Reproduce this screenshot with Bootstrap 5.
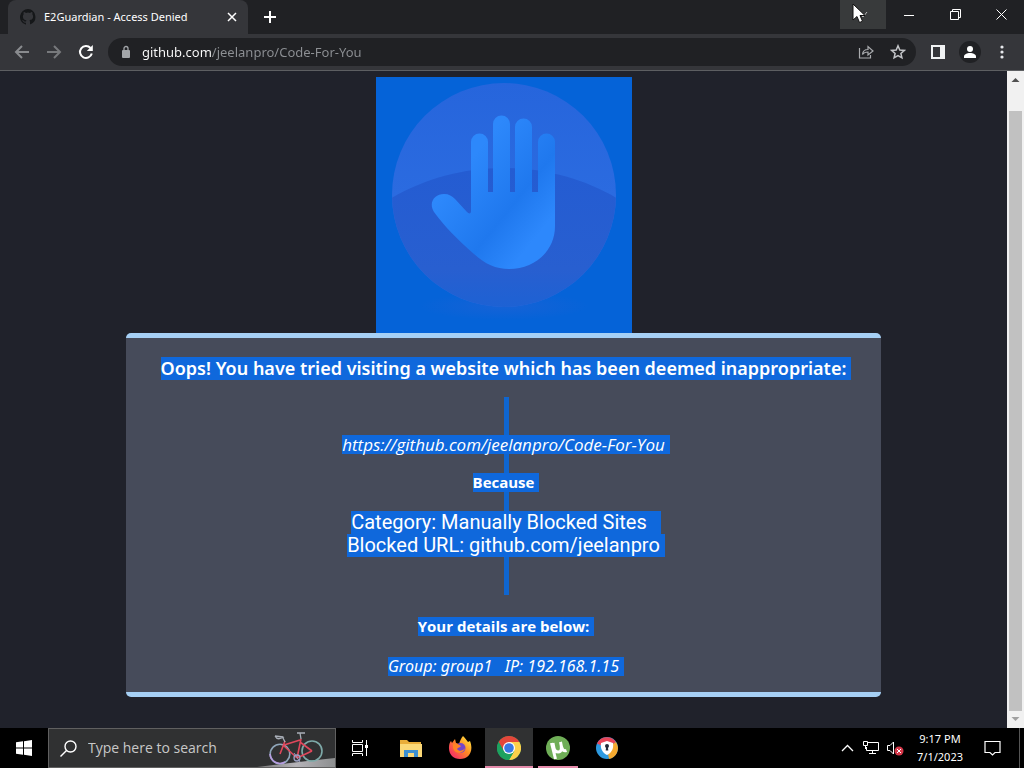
<!DOCTYPE html>
<html lang="en">
<head>
<meta charset="utf-8">
<meta name="viewport" content="width=device-width, initial-scale=1">
<title>E2Guardian - Access Denied</title>
<link rel="stylesheet" href="https://cdn.jsdelivr.net/npm/bootstrap@5.3.0/dist/css/bootstrap.min.css">
<style>
:root { --sel: #0f68dc; --bar: #35363a; --frame: #202124; }
body { font-family: "Noto Sans", sans-serif; font-size: 11px; line-height: 16px; background: #20222b; color: #fff; }
svg { display: block; flex: none; }
.plain { border: 0; background: transparent; color: inherit; padding: 0; display: flex; align-items: center; justify-content: center; }

/* tab strip */
.tabstrip { height: 34px; background: var(--frame); }
.tab-item { width: 240px; margin-left: 8px; padding: 0 10px 0 12px; background: var(--bar); border-radius: 8px 8px 0 0; }
.tab-title { font-size: 11px; }
.win-btn { width: 46px; height: 29px; }
.win-btn.hovered { background: #383a3b; }
.pointer { left: 12px; top: 3px; }

/* toolbar */
.toolbar { height: 37px; padding: 0 6px; background: var(--bar); border-bottom: 1px solid #5d5f62; }
.tool-btn { width: 32px; height: 28px; }
.omnibox { height: 28px; margin: 0 6px; padding: 0 2px 0 12px; border-radius: 14px; background: var(--frame); }
.address { height: 24px; border: 0; outline: 0; padding: 0; margin-left: 10px; font-size: 13px; color: #9a9da1; min-width: 0;
  background: linear-gradient(90deg, #fff 69px, #8d9094 69px); -webkit-background-clip: text; background-clip: text; -webkit-text-fill-color: transparent; }

/* blocked page */
.page-body { padding-top: 6px; font-family: "Open Sans", sans-serif; background: #20222b; min-width: 0; }
.hand-art { background: #0563d8; }
.notice { width: 75%; background: #464b5a; border-top: 5px solid #a6d0f5; border-bottom: 5px solid #a6d0f5; border-radius: 5px; padding: 19px 0 16px; text-align: center; white-space: nowrap; }
.notice h1, .notice h2, .notice p { margin: 0; font-size: 15px; line-height: 19px; }
.notice h1 { font-family: "Noto Sans", sans-serif; font-size: 18px; line-height: 23px; font-weight: 600; }
.notice h2 { font-weight: 700; }
.notice p { font-size: 16px; }
.notice .blocked-url { font-size: 17px; }
.notice .details p { font-family: "Noto Sans", sans-serif; }
.notice .big { font-family: Roboto, sans-serif; font-size: 20px; line-height: 23px; }
.sel { display: inline-block; vertical-align: top; background: var(--sel); box-shadow: 5px 0 0 var(--sel); }
.reason { margin: 17px 0 22px; padding: 38px 0; gap: 19px; z-index: 0; }
.reason::before { content: ""; position: absolute; z-index: -1; left: 50%; top: 0; bottom: 0; width: 5px; background: #0f66d0; }
.trail { padding-right: 9px; }
.details { gap: 21px; }

/* scrollbar */
.scroller { width: 17px; background: #f1f1f1; }
.scroller svg { margin: 0 auto; }
.scroll-gap { height: 23px; }
.scroll-thumb { margin: 0 2px; background: #c1c1c1; }

/* taskbar */
.taskbar { height: 40px; background: #000; }
.task-btn { width: 48px; height: 40px; }
.apps { gap: 1px; margin-left: 3px; }
.running { border-bottom: 2px solid #e58bab; padding-top: 2px; }
.running.active-app { background: #303132; }
.running.narrow { width: 40px; margin: 0 4px; }
.search-box { width: 288px; border: 1px solid #606060; background: #303132; padding-left: 11px; }
.search-box input { border: 0; outline: 0; background: transparent; font-family: "Open Sans", sans-serif; font-size: 14px; line-height: 20px; color: #fff; padding: 0; margin-left: 11px; min-width: 0; }
.search-box input::placeholder { color: #c8c8c8; opacity: 1; }
.tray-btn { width: 24px; height: 40px; }
.clock { width: 66px; line-height: 18px; }
.note-btn { width: 38px; height: 40px; }
.desk-edge { width: 5px; border-left: 1px solid #555; }
</style>
</head>
<body class="d-flex flex-column vh-100 overflow-hidden">

<header>
  <div class="tabstrip d-flex align-items-start">
    <div class="tab-item d-flex align-items-center h-100">
      <svg width="16" height="16" viewBox="0 0 16 16" fill="#151719"><path d="M8 0a8 8 0 0 0-2.500 15.600c.4.1.5-.2.5-.4v-1.500C3.800 14.200 3.300 12.600 3.300 12.600c-.4-.9-.9-1.200-.9-1.200-.7-.5.1-.5.1-.5.8.1 1.200.8 1.200.8.7 1.200 1.900.9 2.300.7.1-.5.3-.9.5-1.100-1.800-.2-3.600-.9-3.600-4 0-.9.3-1.600.8-2.100-.1-.2-.4-1 .1-2.100 0 0 .7-.2 2.200.8a7.500 7.500 0 0 1 4 0c1.500-1 2.200-.8 2.200-.8.4 1.100.2 1.900.1 2.100.5.6.8 1.300.8 2.100 0 3.100-1.900 3.700-3.700 3.900.3.300.6.800.6 1.500v2.200c0 .2.100.500.600.400A8 8 0 0 0 8 0z"/></svg>
      <span class="tab-title ms-2 me-auto">E2Guardian - Access Denied</span>
      <button class="plain" type="button" aria-label="Close tab"><svg width="12" height="12" viewBox="0 0 12 12" stroke="#fff" stroke-width="1.500"><path d="M2 2l8 8M10 2l-8 8"/></svg></button>
    </div>
    <button class="plain h-100 ms-3" type="button" aria-label="New tab"><svg width="12" height="12" viewBox="0 0 12 12" stroke="#fff" stroke-width="2"><path d="M6 0v12M0 6h12"/></svg></button>
    <div class="d-flex ms-auto">
      <button class="plain win-btn hovered position-relative" type="button" aria-label="Search tabs">
        <svg width="10" height="10" viewBox="0 0 10 10" fill="none" stroke="#bbb"><path d="M1 3l4 4 4-5"/></svg>
        <svg class="pointer position-absolute" width="14" height="21" viewBox="0 0 14 21"><path d="M1 1v16l4-3.500 2.500 6 3-1.300L8 12.500h5z" fill="#fff" stroke="#111"/></svg>
      </button>
      <button class="plain win-btn" type="button" aria-label="Minimize"><svg width="10" height="10" viewBox="0 0 10 10" stroke="#fff"><path d="M0 5.500h10"/></svg></button>
      <button class="plain win-btn" type="button" aria-label="Restore"><svg width="11" height="11" viewBox="0 0 11 11" fill="none" stroke="#fff"><path d="M.5 2.500h8v8h-8zM2.500 2.500v-2h8v8h-2"/></svg></button>
      <button class="plain win-btn" type="button" aria-label="Close"><svg width="11" height="11" viewBox="0 0 11 11" stroke="#fff"><path d="M.5.500l10 10M10.500.500l-10 10"/></svg></button>
    </div>
  </div>
  <div class="toolbar d-flex align-items-center">
    <button class="plain tool-btn" type="button" aria-label="Back"><svg width="16" height="16" viewBox="0 0 16 16" fill="none" stroke="#898b8e" stroke-width="2"><path d="M15 8H2M8 2L2 8l6 6"/></svg></button>
    <button class="plain tool-btn" type="button" aria-label="Forward"><svg width="16" height="16" viewBox="0 0 16 16" fill="none" stroke="#77797c" stroke-width="2"><path d="M1 8h13M8 2l6 6-6 6"/></svg></button>
    <button class="plain tool-btn" type="button" aria-label="Reload"><svg width="16" height="16" viewBox="0 0 16 16" fill="none" stroke="#fff" stroke-width="2"><path d="M13.800 9.500A6 6 0 1 1 12.500 4"/><path d="M14.800 1v6h-6z" fill="#fff" stroke="none"/></svg></button>
    <div class="omnibox d-flex align-items-center flex-grow-1">
      <svg width="12" height="14" viewBox="0 0 12 14"><rect x="2" y="5" width="8" height="8" rx="1" fill="#a3a6aa"/><path d="M4 5.500V3.500a2 2 0 0 1 4 0v2" fill="none" stroke="#a3a6aa" stroke-width="1.300"/></svg>
      <input class="address flex-grow-1" type="text" aria-label="Address" value="github.com/jeelanpro/Code-For-You">
      <button class="plain tool-btn" type="button" aria-label="Share"><svg width="16" height="16" viewBox="0 0 16 16" fill="none" stroke="#a9abae" stroke-width="1.200"><path d="M1.500 4v10h11v-3M4.500 10.500c.3-3.500 2-5 5.500-5v-3l5 4.500-5 4V8c-2.700 0-4.300.7-5.500 2.500z"/></svg></button>
      <button class="plain tool-btn" type="button" aria-label="Bookmark"><svg width="16" height="16" viewBox="0 0 16 16" fill="none" stroke="#c3c5c8" stroke-width="1.500"><path d="M8 1.800l1.800 4.200 4.500.400-3.400 3 1 4.400L8 11.500l-3.900 2.300 1-4.400-3.400-3L6.200 6z"/></svg></button>
    </div>
    <button class="plain tool-btn" type="button" aria-label="Side panel"><svg width="14" height="14" viewBox="0 0 14 14"><path d="M1 1h12v12H1z" fill="none" stroke="#f1f3f4" stroke-width="2"/><path d="M9 0h5v14H9z" fill="#f1f3f4"/></svg></button>
    <button class="plain tool-btn" type="button" aria-label="Profile"><svg width="22" height="22" viewBox="0 0 22 22"><circle cx="11" cy="11" r="11" fill="#202124"/><circle cx="11" cy="8" r="3" fill="#fff"/><path d="M5 17v-1.500c0-2 3-3.500 6-3.500s6 1.500 6 3.500V17z" fill="#fff"/></svg></button>
    <button class="plain tool-btn" type="button" aria-label="Menu"><svg width="4" height="14" viewBox="0 0 4 14" fill="#e8eaed"><circle cx="2" cy="2" r="1.600"/><circle cx="2" cy="7" r="1.600"/><circle cx="2" cy="12" r="1.600"/></svg></button>
  </div>
</header>

<div class="d-flex flex-grow-1 overflow-hidden">
  <main class="page-body flex-grow-1 d-flex flex-column align-items-center">
    <svg class="hand-art" width="256" height="256" viewBox="0 0 256 256" role="img" aria-label="Raised hand">
      <defs>
        <linearGradient id="disc" x1="0" y1="0" x2="0" y2="1"><stop offset="0" stop-color="#2665dc"/><stop offset=".5" stop-color="#2b6be0"/></linearGradient>
        <linearGradient id="dune" x1="0" y1="0" x2="0" y2="1"><stop offset="0" stop-color="#245cd2"/><stop offset=".7" stop-color="#285fd0"/><stop offset="1" stop-color="#1c62d4"/></linearGradient>
        <linearGradient id="palm" x1="0" y1="0" x2="1" y2="1"><stop offset=".3" stop-color="#2d88fb"/><stop offset=".62" stop-color="#1f78ee"/><stop offset=".82" stop-color="#2d88fc"/></linearGradient>
        <radialGradient id="shade"><stop offset="0" stop-color="#1662d6"/><stop offset="1" stop-color="#0563d8"/></radialGradient>
        <clipPath id="round"><circle cx="128" cy="118" r="112"/></clipPath>
      </defs>
      <ellipse cx="128" cy="229" rx="85" ry="14" fill="url(#shade)"/>
      <circle cx="128" cy="118" r="112" fill="url(#disc)"/>
      <path clip-path="url(#round)" d="M0 131C35 106 80 91 128 91s93 15 128 40v105H0z" fill="url(#dune)"/>
      <path fill="url(#palm)" d="M95 134V65a8.500 8.500 0 0 1 17 0v50h5V47a8.500 8.500 0 0 1 17 0v68h5V50a8.500 8.500 0 0 1 17 0v65h6V65a8.500 8.500 0 0 1 17 0v84c0 25-20 43-46 43-13 0-24-5-35-15C81 162 69 150 58 135c-6-10 1-18 10-18 5 0 8 2 11 5l12 13c2 2 4 2 4-1z"/>
    </svg>
    <section class="notice">
      <h1><span class="sel">Oops! You have tried visiting a website which has been deemed inappropriate:</span></h1>
      <div class="reason position-relative d-flex flex-column">
        <p class="blocked-url"><em class="sel">https://github.com/jeelanpro/Code-For-You</em></p>
        <h2><span class="sel">Because</span></h2>
        <p class="big"><span class="sel trail">Category: Manually Blocked Sites</span><br><span class="sel">Blocked URL: github.com/jeelanpro</span></p>
      </div>
      <div class="details d-flex flex-column">
        <h2><span class="sel">Your details are below:</span></h2>
        <p><em class="sel">Group: group1 &nbsp; IP: 192.168.1.15</em></p>
      </div>
    </section>
  </main>
  <div class="scroller d-flex flex-column flex-shrink-0" aria-hidden="true">
    <svg width="17" height="17" viewBox="0 0 17 17"><path d="M4.500 11l4-4 4 4z" fill="#505050"/></svg>
    <div class="scroll-gap flex-shrink-0"></div>
    <div class="scroll-thumb flex-grow-1"></div>
    <svg width="17" height="17" viewBox="0 0 17 17"><path d="M4.500 6l4 4 4-4z" fill="#a0a0a0"/></svg>
  </div>
</div>

<footer class="taskbar d-flex flex-shrink-0">
  <button class="plain task-btn" type="button" aria-label="Start"><svg width="16" height="16" viewBox="0 0 16 16" fill="#fff"><path d="M0 2.300L7 1.300v6.200H0zM8 1.200L16 0v7.500H8zM0 8.500h7v6.200l-7-1zM8 8.500h8V16l-8-1.200z"/></svg></button>
  <label class="search-box d-flex align-items-center position-relative overflow-hidden">
    <svg width="17" height="17" viewBox="0 0 17 17" fill="none" stroke="#fff" stroke-width="1.400"><circle cx="10.500" cy="6.500" r="5.500"/><path d="M6.500 10.500L.5 16.500"/></svg>
    <input class="flex-grow-1" type="text" placeholder="Type here to search" aria-label="Search">
    <svg class="align-self-end" width="78" height="36" viewBox="0 0 78 36" fill="none">
      <defs><linearGradient id="hill"><stop stop-color="#777"/><stop offset=".5" stop-color="#b5b3b8"/><stop offset="1" stop-color="#8d8f90"/></linearGradient></defs>
      <path d="M0 36Q40 31 78 27v9z" fill="url(#hill)"/>
      <circle cx="23" cy="23" r="9.800" stroke="#8fa6ba" stroke-width="1.600"/><circle cx="55" cy="20" r="10" stroke="#7eaaa9" stroke-width="1.600"/>
      <path d="M13 23a10 10 0 0 0 15 8" stroke="#b79be0" stroke-width="1.600"/>
      <path d="M23 23l5-13M27 14l16-5M27 15l13 12M40 27l4-19M40 27l15-7M55 20L43 11" stroke="#e0475b" stroke-width="1.600"/>
      <path d="M44 8l-1-6M40 2h8M28 11l-2-4M18 5c2 4 5 3 9 1M18 5l8 1" stroke="#a9afb8" stroke-width="1.300"/>
      <circle cx="40" cy="27" r="3" stroke="#9aa0c2" stroke-width="1.300"/><path d="M37 22l6 9" stroke="#9aa0c2"/>
    </svg>
  </label>
  <button class="plain task-btn" type="button" aria-label="Task view"><svg width="17" height="16" viewBox="0 0 17 16" fill="none" stroke="#fff"><path d="M.5 0v2.500h10V0M.5 4.500h10v7H.5zM.5 16v-2.500h10V16M14.500 0v16"/><path d="M13 5h3v3h-3z" fill="#fff" stroke="none"/></svg></button>
  <div class="apps d-flex">
    <button class="plain task-btn" type="button" aria-label="File Explorer"><svg width="22" height="19" viewBox="0 0 22 19"><path d="M0 1h7l2 2h12v15H0z" fill="#e9ad3a"/><path d="M0 5h22v13H0z" fill="#fbd877"/><path d="M4 18v-7h14v7h-4v-4H8v4z" fill="#3d8fd0"/></svg></button>
    <button class="plain task-btn" type="button" aria-label="Firefox"><svg width="24" height="24" viewBox="0 0 24 24"><defs><linearGradient id="fox" x1="1" y1="0" x2="0" y2="1"><stop offset=".1" stop-color="#ffdf3d"/><stop offset=".45" stop-color="#ff8a24"/><stop offset=".8" stop-color="#f63c5c"/></linearGradient></defs><path d="M15 0c3 3 4 5 5 6l2-1c4 10-1 18-10 18C5 23 .5 18 1 11c0-3 1-5 2-6l1 2 3-4 1 4 3 1c1-3 2-6 4-8z" fill="url(#fox)"/><circle cx="12.500" cy="12" r="5" fill="#7445c9"/><path d="M5 8c3-1 5 0 8 2-1 2-3 1-4 3 2 3 6 2 8-1-1 6-10 7-12 0z" fill="#ff8425"/></svg></button>
    <button class="plain task-btn running active-app" type="button" aria-label="Chrome"><svg width="24" height="24" viewBox="0 0 24 24"><circle cx="12" cy="12" r="12" fill="#1da15f"/><path d="M12 12L1.600 6A12 12 0 0 1 22.400 6z" fill="#e3463a"/><path d="M12 6h10.400A12 12 0 0 1 12 24l5.200-9z" fill="#fdd04a"/><path d="M1.600 6l5.200 9L12 12V6z" fill="#e3463a"/><path d="M1.600 6A12 12 0 0 0 12 24l5.200-9H6.800z" fill="#1da15f"/><circle cx="12" cy="12" r="6" fill="#fff"/><circle cx="12" cy="12" r="4.800" fill="#3978e5"/></svg></button>
    <button class="plain task-btn running narrow" type="button" aria-label="uTorrent"><svg width="24" height="24" viewBox="0 0 24 24" fill="none"><circle cx="12" cy="12" r="12" fill="#6fae57"/><path d="M5.500 7l4 16M7 7c1 5 1 9 5 9s4-4 2.500-10c1 6 2 10 6 8.500" stroke="#fff" stroke-width="3"/></svg></button>
    <button class="plain task-btn" type="button" aria-label="Secure Browser"><svg width="22" height="22" viewBox="0 0 22 22"><circle cx="11" cy="11" r="11" fill="#2d9ae0"/><path d="M11 11L1 6.500A11 11 0 0 1 20 5z" fill="#e94558"/><path d="M11 11l9-6a11 11 0 0 1-7 17z" fill="#f5a92f"/><path d="M11 4l6 2c1 6-2 10-6 12C7 16 4 12 5 6z" fill="#fff"/><circle cx="11" cy="9" r="2" fill="#252b39"/><path d="M10.200 9h1.600l.5 4.500H9.700z" fill="#252b39"/></svg></button>
  </div>
  <div class="d-flex ms-auto">
    <button class="plain tray-btn" type="button" aria-label="Show hidden icons"><svg width="13" height="8" viewBox="0 0 13 8" fill="none" stroke="#fff" stroke-width="1.300"><path d="M1 7l5.500-5.500L12 7"/></svg></button>
    <button class="plain tray-btn" type="button" aria-label="Network"><svg width="17" height="14" viewBox="0 0 17 14" fill="none" stroke="#fff"><path d="M5 1.500h10.500v8h-12V6M6 12.500h7M9.500 9.500v3M.5.500h4v4h-4zM2.500 4.500V8"/></svg></button>
    <button class="plain tray-btn" type="button" aria-label="Volume muted"><svg width="17" height="16" viewBox="0 0 17 16"><path d="M.5 5.500H3L6.500 2v12L3 10.500H.5z" fill="none" stroke="#fff"/><circle cx="12" cy="11" r="4.500" fill="#d6384a"/><path d="M10 9l4 4M14 9l-4 4" stroke="#fff"/></svg></button>
    <button class="plain clock flex-column" type="button"><span>9:17 PM</span><span>7/1/2023</span></button>
    <button class="plain note-btn" type="button" aria-label="Notifications"><svg width="17" height="17" viewBox="0 0 17 17" fill="none" stroke="#fff" stroke-width="1.200"><path d="M1 1.500h15v11h-5L8.500 15 6 12.500H1z"/></svg></button>
    <div class="desk-edge ms-2"></div>
  </div>
</footer>

<script src="https://cdn.jsdelivr.net/npm/bootstrap@5.3.0/dist/js/bootstrap.bundle.min.js"></script>
</body>
</html>
